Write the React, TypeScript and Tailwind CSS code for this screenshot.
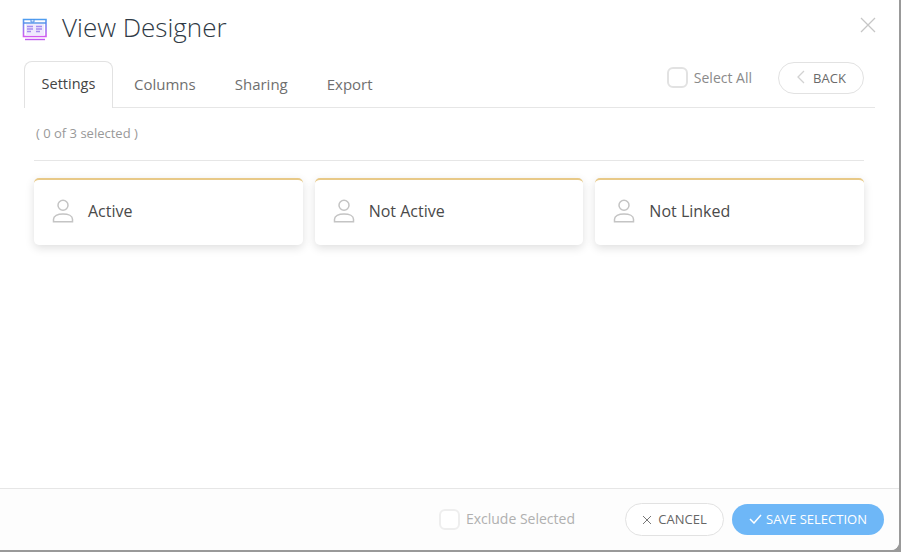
const Check = ({ faded }: { faded?: boolean }) => (
  <span className={`block w-[21px] h-[21px] rounded-[6px] border-2 ${faded ? "border-[#eeeeee]" : "border-[#e2e2e2]"} bg-white`} />
);

const Person = () => (
  <svg width="22" height="24" viewBox="0 0 22 24" fill="none" stroke="#c4c4c4" strokeWidth="1.5">
    <circle cx="11" cy="6.3" r="5" />
    <path d="M1.5 22.8v-2.6c0-3.2 4-5.2 9.5-5.2s9.5 2 9.5 5.2v2.6z" />
  </svg>
);

const Card = ({ label }: { label: string }) => (
  <div className="h-[67px] flex-1 flex items-center rounded-[5px] border-t-2 border-[#e8c987] bg-white pb-[3px] pl-[18px] shadow-[0_3px_10px_rgba(0,0,0,0.13)]">
    <Person />
    <span className="ml-[14px] text-[16px] text-[#4a4a4a]">{label}</span>
  </div>
);

const tabs = ["Columns", "Sharing", "Export"];

export default function App() {
  return (
    <div className="h-[552px] w-[901px] overflow-hidden bg-[#999999] font-['Open_Sans',sans-serif]">
      <div className="flex h-[550px] w-[899px] flex-col rounded-br-[8px] bg-white">
        <header className="relative flex h-[61px] shrink-0 items-center pb-[8px] pl-[22px]">
          <svg width="26" height="24" viewBox="0 0 26 24" fill="none" className="mt-[4px]">
            <defs>
              <linearGradient id="g" x1="0" y1="0" x2="0" y2="1">
                <stop offset="0" stopColor="#4f9df0" />
                <stop offset="1" stopColor="#d25cf0" />
              </linearGradient>
            </defs>
            <path d="M1.5 2.5h22.5v17H1.5z" stroke="url(#g)" strokeWidth="1.6" />
            <path d="M1.5 6h22.5" stroke="#4f8fe8" strokeWidth="1.4" />
            <path d="M9 2v3h3V2" stroke="#4f8fe8" strokeWidth="1" />
            <rect x="4" y="7" width="18" height="11.5" fill="#efe9fd" />
            <path d="M5 9.5h6M5 12h6M5 14.5h4M14 9.5h6M14 12h6M14 14.5h4" stroke="#a58bf0" strokeWidth="1.6" />
            <path d="M3 22.5h20" stroke="#c05cf0" strokeWidth="1.4" />
          </svg>
          <h1 className="ml-[14px] text-[26px] font-light leading-none text-[#2f3a45]">View Designer</h1>
          <svg className="absolute right-[23px] top-[17px]" width="16" height="16" viewBox="0 0 16 16" stroke="#c6c6c6" strokeWidth="1.3">
            <path d="M1 1l14 14M15 1L1 15" />
          </svg>
        </header>

        <div className="mx-[24px] flex h-[47px] shrink-0 items-end border-b border-[#e6e6e6]">
          <div className="-mb-px flex h-[47px] w-[89px] items-center justify-center rounded-t-[8px] border border-b-0 border-[#e2e2e2] bg-white pb-[2px] text-[14.5px] text-[#444444]">
            Settings
          </div>
          <div className="flex h-[46px] items-center">
            <div className="ml-[21px] flex gap-[39px]">
              {tabs.map((t) => (
                <span key={t} className="text-[15px] text-[#6f6f6f]">
                  {t}
                </span>
              ))}
            </div>
          </div>
          <div className="ml-auto mr-[11px] flex h-[46px] items-center pb-[13px]">
            <Check />
            <span className="ml-[6px] text-[14px] text-[#8a8a8a]">Select All</span>
            <button className="ml-[26px] flex h-[32px] w-[86px] items-center justify-center rounded-full border border-[#e2e2e2] bg-white pt-[2px] text-[13px] text-[#6a6a6a]">
              <svg className="-mt-[3px] mr-[8px]" width="9" height="14" viewBox="0 0 9 14" fill="none" stroke="#d2d2d2" strokeWidth="1.3">
                <path d="M8 1L2 7l6 6" />
              </svg>
              BACK
            </button>
          </div>
        </div>

        <main className="flex-1 pl-[34px] pr-[35px]">
          <div className="flex h-[53px] items-center border-b border-[#e6e6e6] pl-[2px] text-[13px] text-[#999999]">
            ( 0 of 3 selected )
          </div>
          <div className="mt-[17px] flex gap-[12px]">
            <Card label="Active" />
            <Card label="Not Active" />
            <Card label="Not Linked" />
          </div>
        </main>

        <footer className="flex h-[62px] shrink-0 items-center justify-end rounded-br-[8px] border-t border-[#e6e6e6] bg-[#fdfdfd] pr-[15px]">
          <Check faded />
          <span className="mb-[2px] ml-[6px] text-[14px] text-[#b0b0b0]">Exclude Selected</span>
          <button className="ml-[50px] flex h-[33px] w-[99px] items-center justify-center rounded-full border border-[#e2e2e2] bg-white text-[13px] text-[#666666]">
            <svg className="mr-[6px]" width="10" height="10" viewBox="0 0 10 10" stroke="#777777" strokeWidth="1">
              <path d="M1 1l8 8M9 1L1 9" />
            </svg>
            CANCEL
          </button>
          <button className="ml-[8px] flex h-[31px] w-[152px] items-center justify-center rounded-full bg-[#6eb7f7] text-[13px] text-white">
            <svg className="mr-[4px] -mt-[2px]" width="13" height="10" viewBox="0 0 13 10" fill="none" stroke="#ffffff" strokeWidth="1.5">
              <path d="M1 5l4 4 7-8" />
            </svg>
            SAVE SELECTION
          </button>
        </footer>
      </div>
    </div>
  );
}
